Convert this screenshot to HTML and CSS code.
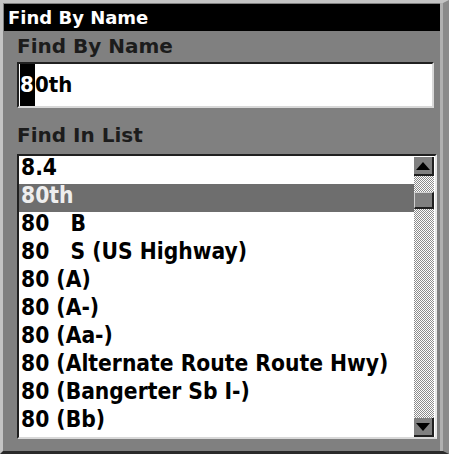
FILE: index.html
```html
<!DOCTYPE html>
<html>
<head>
<meta charset="utf-8">
<link rel="stylesheet" href="styles.css">
</head>
<body>
<div class="frame">
  <div class="title">Find By Name</div>
  <div class="label">Find By Name</div>
  <div class="input"><span class="cursor">8</span>0th</div>
  <div class="label label-list">Find In List</div>
  <div class="list">
    <div class="items">
      <div class="item">8.4</div>
      <div class="item sel">80th</div>
      <div class="item">80&nbsp;&nbsp;&nbsp;B</div>
      <div class="item">80&nbsp;&nbsp;&nbsp;S (US Highway)</div>
      <div class="item">80 (A)</div>
      <div class="item">80 (A-)</div>
      <div class="item">80 (Aa-)</div>
      <div class="item">80 (Alternate Route Route Hwy)</div>
      <div class="item">80 (Bangerter Sb I-)</div>
      <div class="item">80 (Bb)</div>
    </div>
    <div class="scroll">
      <div class="btn"><svg width="14" height="8" viewBox="0 0 14 8"><polygon points="7,0 14,8 0,8" fill="#000"/></svg></div>
      <div class="track">
        <div class="gap1"></div>
        <div class="thumb"></div>
      </div>
      <div class="btn"><svg width="14" height="8" viewBox="0 0 14 8"><polygon points="0,0 14,0 7,8" fill="#000"/></svg></div>
    </div>
  </div>
</div>
</body>
</html>
```
FILE: styles.css
```css
html, body {
  margin: 0;
  padding: 0;
  background: #808080;
}
.frame {
  width: 449px;
  height: 454px;
  box-sizing: border-box;
  background: #808080;
  border-top: 3px solid #c4c4c4;
  border-left: 3px solid #c4c4c4;
  border-bottom: 3px solid #2a2a2a;
  border-right: 6px solid #8a8a8a;
  box-shadow: inset -3px 0 0 #b0b0b0;
  padding: 1px 3px 0 1px;
  display: flex;
  flex-direction: column;
  font-family: "DejaVu Sans Condensed", "DejaVu Sans", sans-serif;
  font-weight: bold;
}
.title {
  background: #000;
  color: #fff;
  height: 27px;
  line-height: 27px;
  font-family: "DejaVu Sans", sans-serif;
  font-size: 18px;
  padding-left: 4px;
}
.label {
  color: #1c1c1c;
  font-family: "DejaVu Sans", sans-serif;
  font-size: 20px;
  height: 26px;
  line-height: 26px;
  padding-left: 13px;
  margin-top: 2px;
}
.label-list {
  margin-top: 14px;
}
.input {
  margin: 3px 0 0 13px;
  width: 417px;
  height: 46px;
  box-sizing: border-box;
  background: #fff;
  border-top: 2px solid #202020;
  border-left: 2px solid #202020;
  border-bottom: 2px solid #d8d8d8;
  border-right: 2px solid #d8d8d8;
  color: #000;
  font-size: 22px;
  line-height: 42px;
  padding-left: 1px;
  display: flex;
}
.cursor {
  background: #000;
  color: #fff;
  width: 15px;
  display: inline-block;
}
.list {
  margin: 6px 0 0 13px;
  width: 420px;
  height: 285px;
  box-sizing: border-box;
  background: #fff;
  border-top: 2px solid #202020;
  border-left: 2px solid #202020;
  border-bottom: 2px solid #d8d8d8;
  border-right: 2px solid #e8e8e8;
  display: flex;
}
.items {
  flex: 1;
}
.item {
  height: 28px;
  line-height: 21px;
  font-size: 22.6px;
  color: #000;
  padding-left: 2px;
  white-space: nowrap;
  box-sizing: border-box;
  padding-top: 1px;
}
.item.sel {
  background: #6e6e6e;
  color: #eee;
}
.scroll {
  width: 20px;
  display: flex;
  flex-direction: column;
  padding-top: 1px;
  margin-right: 1px;
}
.btn {
  height: 19px;
  box-sizing: border-box;
  background: #808080;
  border-right: 2px solid #202020;
  border-bottom: 2px solid #202020;
  display: flex;
  align-items: center;
  justify-content: center;
}
.track {
  flex: 1;
  background: repeating-conic-gradient(#ffffff 0 25%, #8c8c8c 0 50%) 0 0 / 2px 2px;
  display: flex;
  flex-direction: column;
}
.gap1 {
  height: 16px;
}
.thumb {
  height: 17px;
  box-sizing: border-box;
  background: #808080;
  border-top: 1px solid #d0d0d0;
  border-left: 1px solid #d0d0d0;
  border-right: 2px solid #202020;
  border-bottom: 2px solid #202020;
}
```
